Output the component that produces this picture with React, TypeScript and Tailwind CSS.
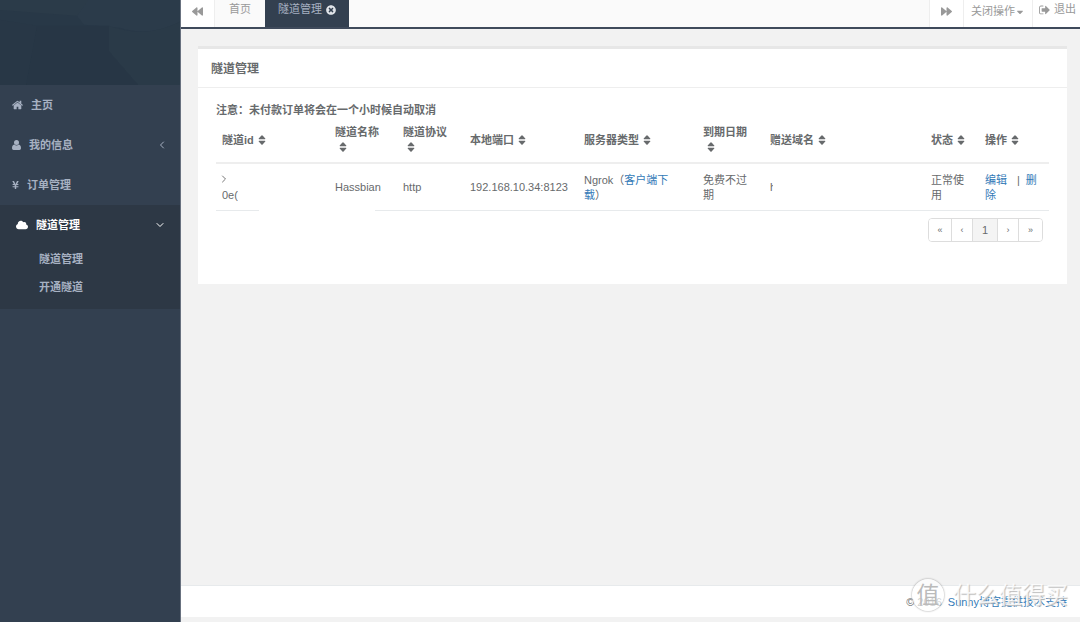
import React from 'react';
import { FaBackward, FaForward, FaTimesCircle, FaCaretDown, FaYenSign, FaCloud } from 'react-icons/fa';
import { ChevronDown, ChevronLeft, ChevronRight } from 'lucide-react';

const HomeIcon = () => (
  <svg viewBox="0 200 1664 1400" className="h-[10px] w-[11px]" fill="currentColor" aria-hidden="true">
    <path d="M1408 992v480q0 26-19 45t-45 19H960v-384H704v384H320q-26 0-45-19t-19-45V992q0-1 .5-3t.5-3l575-474 575 474q1 2 1 6zm223-69l-62 74q-8 9-21 11h-3q-13 0-21-7L832 424l-692 577q-12 8-24 7-13-2-21-11l-62-74q-8-10-7-23.5T37 878l719-599q32-26 76-26t76 26l244 204V288q0-14 9-23t23-9h192q14 0 23 9t9 23v408l219 182q10 8 11 21.5t-7 23.5z" />
  </svg>
);

const UserIcon = () => (
  <svg viewBox="0 0 9 10" className="h-[10px] w-[9px]" fill="currentColor" aria-hidden="true">
    <circle cx="4.5" cy="2.6" r="2.5" />
    <path d="M2.2 4.6Q4.5 6.6 6.8 4.6Q9 5 9 8.3Q9 10 7.4 10H1.6Q0 10 0 8.3Q0 5 2.2 4.6Z" />
  </svg>
);

const SignOutIcon = () => (
  <svg viewBox="0 200 1600 1400" className="h-[10px] w-[11px]" fill="currentColor" aria-hidden="true">
    <path d="M640 1440q0 4 1 20t.5 26.5-3 23.5-10 19.5-20.5 6.5h-320q-119 0-203.5-84.5T0 1248V544q0-119 84.5-203.5T288 256h320q13 0 22.5 9.5T640 288q0 4 1 20t.5 26.5-3 23.5-10 19.5T608 384H288q-66 0-113 47t-47 113v704q0 66 47 113t113 47h312l11.5 1 11.5 3 8 5.5 7 9 2 13.5zm928-544q0 26-19 45l-544 544q-19 19-45 19t-45-19-19-45v-288H448q-26 0-45-19t-19-45V704q0-26 19-45t45-19h448V352q0-26 19-45t45-19 45 19l544 544q19 19 19 45z" />
  </svg>
);

const SortIcon = () => (
  <svg viewBox="0 0 8 10" className="ml-1 inline-block h-[10px] w-2 align-[-1px]" fill="currentColor" aria-hidden="true">
    <path d="M4 .3Q4.4.3 4.8.8L7.3 3.4Q7.6 4.2 6.9 4.2H1.1Q.4 4.2 .7 3.4L3.2.8Q3.6.3 4 .3ZM4 9.7Q4.4 9.7 4.8 9.2L7.3 6.6Q7.6 5.8 6.9 5.8H1.1Q.4 5.8 .7 6.6L3.2 9.2Q3.6 9.7 4 9.7Z" />
  </svg>
);

const columns = [
  { label: '隧道id', width: 'w-[113px]' },
  { label: '隧道名称', width: 'w-[68px]' },
  { label: '隧道协议', width: 'w-[67px]' },
  { label: '本地端口', width: 'w-[114px]' },
  { label: '服务器类型', width: 'w-[119px]' },
  { label: '到期日期', width: 'w-[67px]' },
  { label: '赠送域名', width: '' },
  { label: '状态', width: 'w-[54px]' },
  { label: '操作', width: 'w-[70px]' },
];

const pages = [
  { label: '«', width: 'w-[23px]' },
  { label: '‹', width: 'w-[21px]' },
  { label: '1', width: 'w-[25px]' },
  { label: '›', width: 'w-[21px]' },
  { label: '»', width: 'w-[23px]' },
];

function Sidebar() {
  const item = 'flex h-10 w-full items-center px-3 font-bold';
  return (
    <nav className="flex w-[181px] shrink-0 flex-col border-r border-[#68717f] bg-[#334050] text-[#a7b1c2]">
      <svg viewBox="0 0 180 86" preserveAspectRatio="none" className="h-[85px] w-full shrink-0" aria-hidden="true">
        <path fill="#283847" d="M0 0H180V86H0Z" />
        <path fill="#2b3b49" d="M0 0H90L77 16L0 10Z" />
        <path fill="#2b3b4a" d="M88 0H180V22Q150 38 120 28L84 25L77 16Z" />
        <path fill="#2a3a48" d="M109 26Q145 40 180 22V86H138L109 52Z" />
        <path fill="#273645" d="M37 26H109V52L138 86H26Z" />
        <path fill="#283746" d="M0 20L37 26L26 86H0Z" />
      </svg>
      <a href="#home" className={item}><HomeIcon /><span className="ml-2">主页</span></a>
      <button type="button" className={item}>
        <UserIcon /><span className="ml-2">我的信息</span><ChevronLeft className="ml-auto size-3" />
      </button>
      <a href="#orders" className={item}><FaYenSign className="h-[10px] w-[7px]" /><span className="ml-2">订单管理</span></a>
      <div className="bg-[#2d3845] pb-2">
        <button type="button" className="flex h-10 w-full items-center pr-[14px] pl-4 font-bold text-white">
          <FaCloud className="size-3" /><span className="ml-2">隧道管理</span><ChevronDown className="ml-auto size-3" />
        </button>
        <a href="#tunnels" className="flex h-7 items-center pl-[39px] font-bold">隧道管理</a>
        <a href="#open" className="flex h-7 items-center pl-[39px] font-bold">开通隧道</a>
      </div>
    </nav>
  );
}

function TopTabs() {
  return (
    <header className="flex h-[29px] border-b-2 border-[#3f4a5b] bg-[#fafafa] text-[#999]">
      <button type="button" aria-label="向左" className="flex w-[34px] items-center justify-center border-r border-[#eee] bg-white pb-1"><FaBackward className="size-[11px]" /></button>
      <a href="#index" className="flex w-[50px] items-center justify-center pb-2">首页</a>
      <div className="flex w-21 items-center justify-center gap-1 bg-[#334050] pb-2 text-[#a7b1c2]">
        <a href="#tunnels">隧道管理</a>
        <button type="button" aria-label="关闭" className="text-[#e0e3e8]"><FaTimesCircle className="size-[10px]" /></button>
      </div>
      <button type="button" aria-label="向右" className="ml-auto flex w-[35px] items-center justify-center border-x border-[#eee] bg-white pb-1"><FaForward className="size-[11px]" /></button>
      <button type="button" className="flex w-[69px] items-center justify-center border-r border-[#eee] bg-white pb-1">关闭操作<FaCaretDown className="size-[10px]" /></button>
      <a href="#logout" className="flex w-[47px] items-center justify-end gap-1 bg-white pr-1 pb-2"><SignOutIcon />退出</a>
    </header>
  );
}

function TunnelTable() {
  const rule = 'bg-[linear-gradient(#e7eaec,#e7eaec)] bg-no-repeat';
  const full = `${rule} bg-[length:100%_1px] bg-bottom`;
  const cell = `pl-[6px] pr-3 ${full}`;
  const link = 'text-[#337ab7]';
  return (
    <table className="w-full table-fixed text-left">
      <thead>
        <tr className="h-[45px] border-b-2 border-[#eee]">
          {columns.map((c) => (
            <th key={c.label} className={`${c.width} pr-3 pl-[6px] align-middle font-bold`}>{c.label}<wbr /><SortIcon /></th>
          ))}
        </tr>
      </thead>
      <tbody>
        <tr className="h-12">
          <td className={`pl-[6px] ${rule} bg-[length:43px_1px] bg-left-bottom`}>
            <ChevronRight className="-ml-1 mb-[3px] size-3 text-[#777]" />
            <div className="w-4 overflow-hidden">0e(</div>
          </td>
          <td className={`pl-[6px] whitespace-nowrap ${rule} bg-[length:22px_1px] bg-right-bottom`}>Hassbian</td>
          <td className={cell}>http</td>
          <td className={`pl-[6px] whitespace-nowrap ${full}`}>192.168.10.34:8123</td>
          <td className={`pr-[26px] pl-[6px] ${full}`}>Ngrok（<a href="#download" className={link}>客户端下载</a>）</td>
          <td className={cell}>免费不过期</td>
          <td className={cell}><div className="w-[3px] overflow-hidden">h</div></td>
          <td className={cell}>正常使用</td>
          <td className={`px-[6px] ${full}`}><a href="#edit" className={link}>编辑</a><span className="pr-[6px] pl-[10px]">|</span><a href="#delete" className={link}>删除</a></td>
        </tr>
      </tbody>
    </table>
  );
}

export default function App() {
  return (
    <div className="flex min-h-screen bg-[#f2f2f2] font-['Liberation_Sans','Noto_Sans_CJK_SC',sans-serif] text-[11px] leading-[15px] text-[#676a6c]">
      <Sidebar />
      <div className="flex min-w-0 flex-1 flex-col">
        <TopTabs />
        <main className="flex-1 pt-[17px] pr-[13px] pb-4 pl-[17px]">
          <section className="border-t-3 border-[#e7e7e7] bg-white">
            <h1 className="border-b border-[#eee] px-[13px] pt-[13px] pb-[11px] text-xs leading-[14px] font-bold">隧道管理</h1>
            <div className="px-[18px] pt-[15px] pb-[42px]">
              <p className="font-bold">注意：未付款订单将会在一个小时候自动取消</p>
              <TunnelTable />
              <div className="mt-[7px] mr-[6px] flex justify-end">
                <div className="flex h-6 divide-x divide-[#ddd] overflow-hidden rounded-sm border border-[#ddd]">
                  {pages.map((p) => (
                    <button type="button" key={p.label} className={`${p.width} ${p.label === '1' ? 'bg-[#f4f4f4]' : 'bg-white text-[9px]'}`}>{p.label}</button>
                  ))}
                </div>
              </div>
            </div>
          </section>
        </main>
        <footer className="relative mb-[5px] flex h-8 items-center justify-end border-t border-[#e7eaec] bg-white pt-[2px] pr-[13px]">
          <span className="mr-[6px]">© 2016</span>
          <a href="#support" className="text-[#337ab7]">Sunny博客提供技术支持</a>
          <div className="absolute right-3 bottom-[6px] flex items-center gap-[9px] text-[23px] leading-8 text-white/80 [text-shadow:1px_1px_1px_#bbb]">
            <span className="flex size-8 items-center justify-center rounded-full bg-white/70 text-[23px] text-[#bbb] shadow-[0_0_2px_#888] [text-shadow:none]">值</span>
            <span>什么值得买</span>
          </div>
        </footer>
      </div>
    </div>
  );
}
